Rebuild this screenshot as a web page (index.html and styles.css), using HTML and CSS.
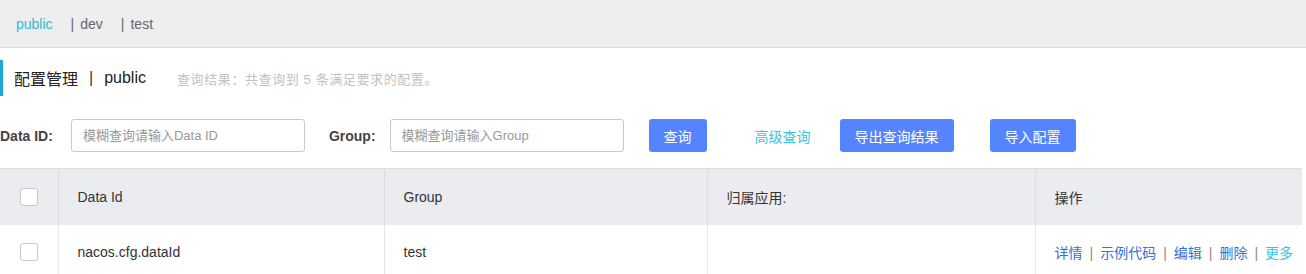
FILE: index.html
```html
<!DOCTYPE html>
<html lang="zh-CN">
<head>
    <meta charset="UTF-8">
    <title>配置管理</title>
    <link rel="stylesheet" href="styles.css">
</head>
<body>
    <!-- Namespace tabs -->
    <div class="ns-bar">
        <span class="ns-item active">public</span>
        <span class="ns-item"><span class="ns-sep">|</span>dev</span>
        <span class="ns-item"><span class="ns-sep">|</span>test</span>
    </div>

    <!-- Page title -->
    <div class="title-row">
        <span class="title">配置管理</span>
        <span class="title-sep">|</span>
        <span class="title">public</span>
        <span class="result-tip">查询结果：共查询到 5 条满足要求的配置。</span>
    </div>

    <!-- Search form -->
    <div class="search-row">
        <label class="field-label id-label">Data ID:</label>
        <input class="field-input" type="text" placeholder="模糊查询请输入Data ID">
        <label class="field-label group-label">Group:</label>
        <input class="field-input" type="text" placeholder="模糊查询请输入Group">
        <button class="btn btn-search">查询</button>
        <a class="adv-link">高级查询</a>
        <button class="btn btn-export">导出查询结果</button>
        <button class="btn btn-import">导入配置</button>
    </div>

    <!-- Config list -->
    <table class="config-table">
        <colgroup>
            <col class="col-check">
            <col class="col-id">
            <col class="col-group">
            <col class="col-app">
            <col>
        </colgroup>
        <thead>
            <tr>
                <th class="check-cell"><span class="checkbox"></span></th>
                <th>Data Id</th>
                <th>Group</th>
                <th>归属应用:</th>
                <th>操作</th>
            </tr>
        </thead>
        <tbody>
            <tr>
                <td class="check-cell"><span class="checkbox"></span></td>
                <td>nacos.cfg.dataId</td>
                <td>test</td>
                <td></td>
                <td class="ops"><a>详情</a><span class="op-sep">|</span><a>示例代码</a><span class="op-sep">|</span><a>编辑</a><span class="op-sep">|</span><a>删除</a><span class="op-sep">|</span><a class="more">更多</a></td>
            </tr>
        </tbody>
    </table>
</body>
</html>
```

FILE: styles.css
```css
body {
    margin: 0;
    font-family: "Liberation Sans", "Noto Sans CJK SC", sans-serif;
    font-size: 14px;
    color: #333;
    background: #fff;
    overflow: hidden;
}

/* Namespace bar */
.ns-bar {
    height: 47px;
    display: flex;
    align-items: center;
    padding-left: 16px;
    background: #eeeeee;
    border-bottom: 1px solid #dcdcdc;
    color: #666;
}

.ns-item {
    margin-right: 18px;
}

.ns-item.active {
    color: #33b9db;
}

.ns-sep {
    margin-right: 6px;
    color: #666;
}

/* Title */
.title-row {
    margin-top: 12px;
    height: 36px;
    display: flex;
    align-items: center;
    padding-left: 11px;
    border-left: 3px solid #1fa6d9;
}

.title {
    font-size: 16px;
    color: #222;
}

.title-sep {
    font-size: 16px;
    margin: 0 11px;
}

.result-tip {
    margin-left: 31px;
    font-size: 13px;
    letter-spacing: 0.6px;
    color: #c2c2c2;
}

/* Search form */
.search-row {
    margin-top: 23px;
    display: flex;
    align-items: center;
    height: 33px;
}

.field-label {
    font-weight: bold;
    color: #444;
    margin-right: 14px;
}

.id-label {
    margin-right: 18px;
}

.group-label {
    margin-left: 24px;
}

.field-input {
    width: 234px;
    height: 33px;
    box-sizing: border-box;
    border: 1px solid #c8c8cc;
    border-radius: 3px;
    padding: 0 11px;
    font-family: inherit;
    font-size: 13px;
    color: #333;
}

.field-input::placeholder {
    color: #999;
}

.btn {
    height: 33px;
    border: none;
    border-radius: 3px;
    background: #5584ff;
    color: #fff;
    font-family: inherit;
    font-size: 14px;
    padding: 0;
    cursor: pointer;
}

.btn-search {
    margin-left: 25px;
    width: 58px;
}

.adv-link {
    margin-left: 48px;
    margin-right: 29px;
    color: #35c6e0;
    font-size: 14px;
    cursor: pointer;
}

.btn-export {
    width: 114px;
}

.btn-import {
    margin-left: 36px;
    width: 86px;
}

/* Table */
.config-table {
    margin-top: 16px;
    width: 1302px;
    border-collapse: collapse;
    table-layout: fixed;
}

.col-check { width: 58px; }
.col-id { width: 326px; }
.col-group { width: 323px; }
.col-app { width: 328px; }

.config-table th {
    height: 56px;
    background: #ebecf0;
    font-weight: normal;
    text-align: left;
    padding: 0 19px;
    border-top: 1px solid #dcdde3;
    border-left: 1px solid #dcdde3;
    color: #333;
}

.config-table td {
    height: 54px;
    padding: 0 19px;
    border-left: 1px solid #e4e5ea;
    color: #333;
}

.config-table th:first-child,
.config-table td:first-child {
    border-left: none;
}

.check-cell {
    padding: 0 !important;
    text-align: center !important;
}

.checkbox {
    display: inline-block;
    width: 16px;
    height: 16px;
    border: 1px solid #c4c6cf;
    border-radius: 3px;
    background: #fff;
    vertical-align: middle;
}

.config-table td.ops {
    padding-right: 0;
    white-space: nowrap;
}

.ops a {
    color: #3173d6;
    cursor: pointer;
}

.ops a.more {
    color: #35c6e0;
}

.op-sep {
    margin: 0 7px;
    color: #888;
}
```
